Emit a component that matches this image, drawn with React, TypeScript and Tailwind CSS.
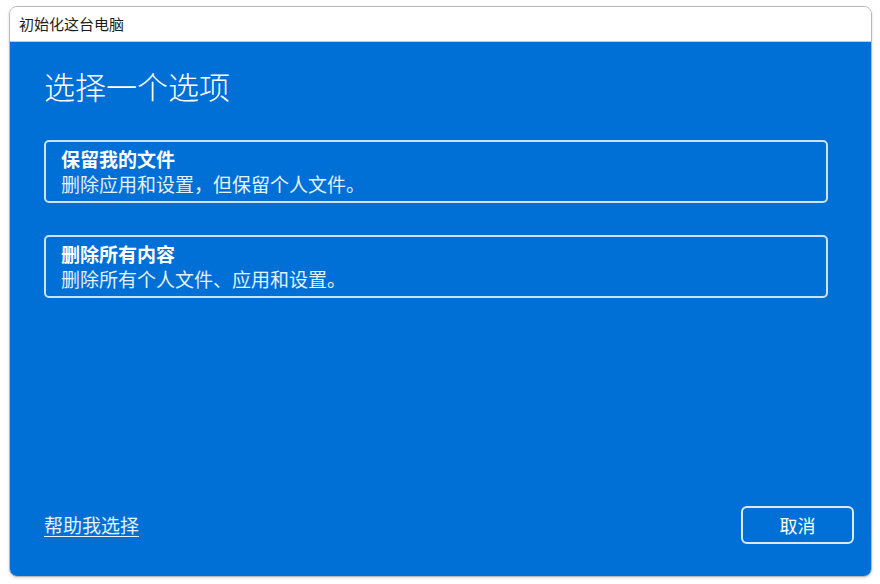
const font = { fontFamily: '"Noto Sans CJK SC", "Noto Sans", sans-serif' };

function OptionCard({ title, desc }: { title: string; desc: string }) {
  return (
    <button className="flex h-[63px] w-[784px] flex-col items-start rounded-[5px] border-2 border-white/80 pl-[15px] pt-[5px] text-left text-white">
      <span className="text-[19px] font-bold leading-[24px]">{title}</span>
      <span className="mt-[1px] text-[19px] leading-[24px] text-white/90">{desc}</span>
    </button>
  );
}

export default function App() {
  return (
    <div className="h-[584px] w-[880px] bg-white pl-[9px] pt-[6px]" style={font}>
      <div className="flex h-[571px] w-[863px] flex-col overflow-hidden rounded-[8px] border border-[#b9b9b9] shadow-[0_1px_3px_rgba(0,0,0,0.15)]">
        <div className="flex h-[35px] shrink-0 items-center border-b border-[#c9c9c9] bg-white pl-[9px] text-[15px] text-[#1b1b1b]">
          初始化这台电脑
        </div>
        <div className="flex flex-1 flex-col bg-[#006fd6] pl-[34px] pr-[17px]">
          <h1 className="pt-[24px] text-[31px] font-light leading-[40px] text-white">选择一个选项</h1>
          <div className="mt-[34px] flex flex-col gap-[32px]">
            <OptionCard title="保留我的文件" desc="删除应用和设置，但保留个人文件。" />
            <OptionCard title="删除所有内容" desc="删除所有个人文件、应用和设置。" />
          </div>
          <div className="flex-1" />
          <div className="flex items-center justify-between pb-[32px]">
            <a className="text-[19px] leading-[24px] text-white/90 underline underline-offset-[3px]" href="#">
              帮助我选择
            </a>
            <button className="h-[38px] w-[113px] rounded-[6px] border-2 border-white/85 text-[18px] text-white">
              取消
            </button>
          </div>
        </div>
      </div>
    </div>
  );
}
